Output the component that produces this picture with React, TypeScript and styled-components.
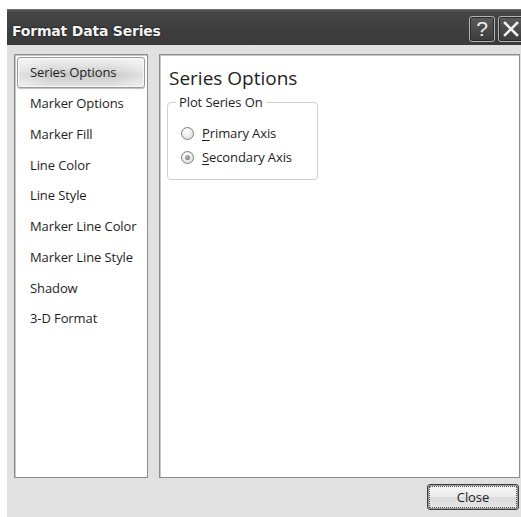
import { FC } from "react";
import styled, { createGlobalStyle } from "styled-components";

const GlobalStyle = createGlobalStyle`
  html, body {
    margin: 0;
    padding: 0;
    background: #ffffff;
  }
  #root {
    width: 521px;
    height: 517px;
    overflow: hidden;
  }
`;

const Dialog = styled.div`
  margin: 9px 0 0 7px;
  width: 530px;
  height: 508px;
  background: #e1e1e1;
  font-family: "Open Sans", "Noto Sans", sans-serif;
  color: #1e1e1e;
  display: flex;
  flex-direction: column;
`;

const TitleBar = styled.div`
  height: 36px;
  box-sizing: border-box;
  display: flex;
  align-items: center;
  padding: 2px 13px 0 5px;
  background: linear-gradient(#5a5a5a 0px, #474747 2px, #3f3f3f 50%, #3a3a3a 100%);
  border-top: 1px solid #6e6e6e;
`;

const Title = styled.div`
  flex: 1;
  padding-top: 4px;
  color: #f4f4f4;
  font-family: "DejaVu Sans", "Liberation Sans", sans-serif;
  font-weight: bold;
  font-size: 14px;
  letter-spacing: -0.2px;
  text-shadow: 0 0 2px #000;
`;

const CaptionButton = styled.div`
  width: 26px;
  height: 26px;
  flex: none;
  box-sizing: border-box;
  margin-left: 3px;
  border: 1px solid #b5b5b5;
  border-radius: 3px;
  background: linear-gradient(#5b5b5b, #3c3c3c);
  box-shadow: inset 0 0 0 1px #2a2a2a;
  display: flex;
  align-items: center;
  justify-content: center;
  color: #f0f0f0;
  font-family: "Liberation Sans", sans-serif;
  font-size: 21px;
  line-height: 1;
`;

const Body = styled.div`
  display: grid;
  grid-template-columns: 134px 361px;
  column-gap: 11px;
  padding: 9px 7px 0;
  height: 424px;
`;

const Panel = styled.div`
  background: #ffffff;
  border: 1px solid #8c8c8c;
  box-shadow: inset 1px 1px 0 #c8c8c8;
  box-sizing: border-box;
`;

const NavList = styled(Panel)`
  padding: 2px 2px;
  display: flex;
  flex-direction: column;
`;

const NavItem = styled.div<{ $active?: boolean }>`
  height: 30.75px;
  flex: none;
  box-sizing: border-box;
  display: flex;
  align-items: center;
  padding-left: 12px;
  font-size: 13px;
  letter-spacing: -0.1px;
  border-radius: 3px;
  border: 1px solid ${(p) => (p.$active ? "#9a9a9a" : "transparent")};
  background: ${(p) =>
    p.$active
      ? "linear-gradient(90deg, rgba(255,255,255,0.45), rgba(255,255,255,0) 25%, rgba(255,255,255,0) 75%, rgba(255,255,255,0.45)), linear-gradient(#f2f2f2, #d6d6d6 45%, #c9c9c9 55%, #e4e4e4)"
      : "transparent"};
  box-shadow: ${(p) => (p.$active ? "inset 0 0 0 1px #f7f7f7, 0 1px 1px #bdbdbd" : "none")};
`;

const Content = styled(Panel)`
  padding: 11px 7px;
`;

const Heading = styled.div`
  font-size: 19px;
  line-height: 24px;
  margin: 0 0 3px 2px;
`;

const GroupBox = styled.fieldset`
  width: 151px;
  height: 87px;
  box-sizing: border-box;
  margin: 0;
  padding: 13px 0 0 13px;
  border: 1px solid #d0d0d0;
  border-radius: 4px;
  display: flex;
  flex-direction: column;
  gap: 6px;
`;

const Legend = styled.legend`
  font-size: 13px;
  letter-spacing: -0.1px;
  padding: 0 3px;
  margin-left: -5px;
`;

const RadioRow = styled.label`
  display: flex;
  align-items: center;
  gap: 8px;
  font-size: 13px;
  letter-spacing: -0.1px;
  height: 18px;
`;

const RadioDot = styled.span<{ $checked?: boolean }>`
  width: 13px;
  height: 13px;
  flex: none;
  box-sizing: border-box;
  border-radius: 50%;
  border: 1px solid #7f7f7f;
  background: radial-gradient(circle at 40% 35%, #ffffff, #e4e4e4 70%, #d4d4d4);
  display: flex;
  align-items: center;
  justify-content: center;

  &::after {
    content: "";
    width: 5px;
    height: 5px;
    border-radius: 50%;
    background: ${(p) => (p.$checked ? "radial-gradient(circle at 40% 35%, #b8b8b8, #6e6e6e)" : "transparent")};
  }
`;

const Key = styled.span`
  text-decoration: underline;
  text-underline-offset: 2px;
`;

const Footer = styled.div`
  display: flex;
  justify-content: flex-end;
  padding: 6px 18px 0 0;
`;

const Button = styled.button`
  width: 92px;
  height: 26px;
  box-sizing: border-box;
  border: 1px solid #3c3c3c;
  border-radius: 3px;
  background: linear-gradient(#f7f7f7, #ebebeb 50%, #dcdcdc 51%, #e6e6e6);
  box-shadow: inset 0 0 0 1px #9c9c9c;
  outline: 1px dotted #505050;
  outline-offset: -3px;
  font-family: "Open Sans", "Noto Sans", sans-serif;
  font-size: 13px;
  letter-spacing: -0.1px;
  color: #1e1e1e;
  padding: 0;
`;

const navItems = [
  "Series Options",
  "Marker Options",
  "Marker Fill",
  "Line Color",
  "Line Style",
  "Marker Line Color",
  "Marker Line Style",
  "Shadow",
  "3-D Format",
];

const App: FC = () => {
  return (
    <>
      <GlobalStyle />
      <Dialog>
        <TitleBar>
          <Title>Format Data Series</Title>
          <CaptionButton>?</CaptionButton>
          <CaptionButton>
            <svg width="18" height="18" viewBox="0 0 18 18">
              <path d="M3 3 L15 15 M15 3 L3 15" stroke="#f0f0f0" strokeWidth="2.6" strokeLinecap="square" />
            </svg>
          </CaptionButton>
        </TitleBar>
        <Body>
          <NavList>
            {navItems.map((item, i) => (
              <NavItem key={item} $active={i === 0}>
                {item}
              </NavItem>
            ))}
          </NavList>
          <Content>
            <Heading>Series Options</Heading>
            <GroupBox>
              <Legend>Plot Series On</Legend>
              <RadioRow>
                <RadioDot />
                <span>
                  <Key>P</Key>rimary Axis
                </span>
              </RadioRow>
              <RadioRow>
                <RadioDot $checked />
                <span>
                  <Key>S</Key>econdary Axis
                </span>
              </RadioRow>
            </GroupBox>
          </Content>
        </Body>
        <Footer>
          <Button>Close</Button>
        </Footer>
      </Dialog>
    </>
  );
};

export default App;
